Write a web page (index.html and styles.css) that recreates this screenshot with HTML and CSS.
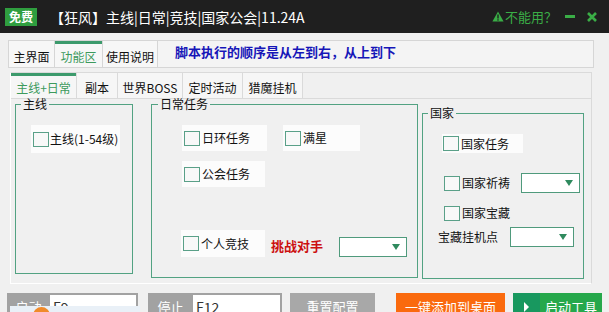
FILE: index.html
```html
<!DOCTYPE html>
<html>
<head>
<meta charset="utf-8">
<title>【狂风】主线|日常|竞技|国家公会|11.24A</title>
<link rel="stylesheet" href="styles.css">
</head>
<body>
<div class="titlebar">
  <span class="badge">免费</span>
  <span class="title">【狂风】主线|日常|竞技|国家公会|11.24A</span>
  <span class="help">
    <svg class="warn" width="12" height="11" viewBox="0 0 12 11"><path d="M6 0.5 L11.6 10.5 L0.4 10.5 Z" fill="#3aad46"/><rect x="5.3" y="3.5" width="1.4" height="4" fill="#1f1f1f"/><rect x="5.3" y="8.3" width="1.4" height="1.3" fill="#1f1f1f"/></svg>不能用？
  </span>
  <span class="min"></span>
  <svg class="close" width="10" height="10" viewBox="0 0 10 10"><path d="M1 1 L9 9 M9 1 L1 9" stroke="#3aad46" stroke-width="2.6"/></svg>
</div>

<div class="frame">
  <div class="tabs1">
    <div class="tab t-a">主界面</div>
    <div class="tab t-b on">功能区</div>
    <div class="tab t-c">使用说明</div>
    <div class="tip">脚本执行的顺序是从左到右，从上到下</div>
  </div>

  <div class="panel">
    <div class="tabs2">
      <div class="tab2 w66 on">主线+日常</div>
      <div class="tab2 w41">副本</div>
      <div class="tab2 w65">世界BOSS</div>
      <div class="tab2 w60">定时活动</div>
      <div class="tab2 w60">猎魔挂机</div>
    </div>

    <div class="groups">
      <fieldset class="grp g-main">
        <legend>主线</legend>
        <label class="chk c-main"><i class="box"></i>主线(1-54级)</label>
      </fieldset>

      <fieldset class="grp g-daily">
        <legend>日常任务</legend>
        <div class="row">
          <label class="chk c-ring"><i class="box"></i>日环任务</label>
          <label class="chk c-star"><i class="box"></i>满星</label>
        </div>
        <div class="row r-guild">
          <label class="chk c-guild"><i class="box"></i>公会任务</label>
        </div>
        <div class="row r-arena">
          <label class="chk c-arena"><i class="box"></i>个人竞技</label>
          <span class="red">挑战对手</span>
          <span class="sel s-arena"><i class="arrow"></i></span>
        </div>
      </fieldset>

      <fieldset class="grp g-nation">
        <legend>国家</legend>
        <label class="chk c-nation"><i class="box"></i>国家任务</label>
        <div class="line l-pray">
          <label class="plain"><i class="box"></i>国家祈祷</label>
          <span class="sel s-pray"><i class="arrow"></i></span>
        </div>
        <div class="line l-treasure">
          <label class="plain"><i class="box"></i>国家宝藏</label>
        </div>
        <div class="line l-spot">
          <span class="spot">宝藏挂机点</span>
          <span class="sel s-spot"><i class="arrow"></i></span>
        </div>
      </fieldset>
    </div>
  </div>
</div>

<div class="bottom">
  <div class="key k-start"><span class="klabel">启动</span><span class="kinput">F9</span></div>
  <div class="key k-stop"><span class="klabel">停止</span><span class="kinput">F12</span></div>
  <div class="btn b-reset">重置配置</div>
  <div class="btn b-desk">一键添加到桌面</div>
  <div class="btn b-run"><span class="play"></span><span class="run-text">启动工具</span></div>
</div>

<div class="toast"><span class="dot"></span></div>
</body>
</html>
```

FILE: styles.css
```css
body{
	margin: 0;
	width: 609px;
	height: 312px;
	overflow: hidden;
	position: relative;
	background: #f0f0f0;
	font-family: "Noto Sans CJK SC", "Microsoft YaHei", sans-serif;
	font-size: 12px;
	color: #111;
}

/* title bar */
.titlebar{
	height: 33px;
	background: #1f1f1f;
	display: flex;
	align-items: center;
	padding-left: 5px;
}
.badge{
	width: 32px;
	height: 18px;
	line-height: 18px;
	background: #2f9e3f;
	color: #fff;
	font-size: 12px;
	font-weight: bold;
	text-align: center;
}
.title{
	margin-left: 13px;
	color: #fff;
	font-size: 14px;
	line-height: 18px;
}
.help{
	margin-left: auto;
	display: flex;
	align-items: center;
	gap: 1px;
	color: #3aad46;
	font-size: 13px;
	line-height: 18px;
}
.min{
	width: 10px;
	height: 3px;
	background: #3aad46;
	margin-left: 8px;
}
.close{
	margin: 0 12px 0 12px;
}

/* outer tabs */
.frame{
	margin: 7px 15px 0 3px;
}
.tabs1{
	display: flex;
	height: 28px;
	margin-left: 5px;
	box-sizing: border-box;
	border: 1px solid #d6d6d6;
	border-left: 0;
	background: #f4f4f4;
}
.tab{
	box-sizing: border-box;
	height: 26px;
	padding-top: 8px;
	line-height: 16px;
	text-align: center;
	border-right: 1px solid #d6d6d6;
	background: #f7f7f7;
}
.t-a{ width: 47px; border-left: 1px solid #d6d6d6; }
.t-b{ width: 48px; }
.t-c{ width: 55px; }
.tab.on, .tab2.on{
	color: #3c9a5c;
	box-shadow: inset 0 3px 0 #3c9a6c;
}
.tip{
	margin-left: 17px;
	padding-top: 3px;
	line-height: 16px;
	font-size: 13px;
	font-weight: bold;
	color: #1616b8;
}

/* inner panel */
.panel{
	margin: 4px 0 0 7px;
	width: 582px;
	height: 212px;
	box-sizing: border-box;
	border-top: 1px solid #dadada;
	border-right: 1px solid #dadada;
	border-left: 1px solid #fff;
	border-bottom: 1px solid #fff;
}
.tabs2{
	display: flex;
	height: 25px;
	border-bottom: 1px solid #dadada;
}
.tab2{
	box-sizing: border-box;
	height: 25px;
	padding-top: 7px;
	line-height: 16px;
	text-align: center;
	border-right: 1px solid #dadada;
	background: #f6f6f6;
}
.w66{ width: 66px; }
.w41{ width: 41px; }
.w65{ width: 65px; }
.w60{ width: 60px; }

/* group boxes */
.groups{
	display: flex;
	align-items: flex-start;
	margin-top: -1px;
	padding-left: 4px;
}
.grp{
	margin: 0;
	padding: 15px 0 0 0;
	min-width: 0;
	box-sizing: border-box;
	border: 1px solid #52a282;
}
.grp legend{
	padding: 0 2px;
	line-height: 12px;
	font-size: 12px;
}
.g-main{
	width: 118px;
	height: 176px;
	padding-left: 15px;
}
.g-main legend{ margin-left: -10px; }
.g-daily{
	width: 267px;
	height: 180px;
	margin-left: 18px;
	padding-left: 30px;
}
.g-daily legend{ margin-left: -24px; }
.g-nation{
	width: 162px;
	height: 172px;
	margin: 9px 0 0 4px;
	padding-left: 19px;
}
.g-nation legend{ margin-left: -14px; }

/* checkbox items */
.box{
	display: inline-block;
	width: 14px;
	height: 13px;
	border: 1px solid #5aa088;
	background: #f8f8f8;
	flex: none;
}
.chk{
	display: flex;
	align-items: center;
	gap: 2px;
	padding-left: 2px;
	box-sizing: border-box;
	background: #fcfcfc;
	line-height: 16px;
}
.c-main{ width: 89px; height: 28px; gap: 1px; }
.c-ring{ width: 85px; height: 26px; }
.c-star{ width: 77px; height: 26px; margin-left: 16px; }
.c-guild{ width: 83px; height: 26px; }
.c-arena{ width: 84px; height: 27px; margin-left: -1px; }
.c-nation{ width: 81px; height: 19px; padding-left: 1px; }

.row{
	display: flex;
	align-items: center;
}
.r-guild{ margin-top: 10px; }
.r-arena{ margin-top: 43px; }
.red{
	margin-left: 6px;
	margin-top: 4px;
	font-size: 13px;
	font-weight: bold;
	color: #cc1010;
}

.sel{
	display: flex;
	align-items: center;
	justify-content: flex-end;
	box-sizing: border-box;
	height: 20px;
	padding-right: 6px;
	border: 1px solid #4f9a7c;
	background: #fff;
}
.arrow{
	width: 0;
	height: 0;
	border-left: 4px solid transparent;
	border-right: 4px solid transparent;
	border-top: 6px solid #2f8a5e;
}
.s-arena{ width: 68px; margin: 7px 0 0 16px; }
.s-pray{ width: 59px; margin-left: 11px; }
.s-spot{ width: 64px; margin-left: 12px; }

.line{
	display: flex;
	align-items: center;
}
.plain{
	display: flex;
	align-items: center;
	gap: 10px;
	margin-left: 2px;
	line-height: 16px;
}
.plain .box{ margin-right: -8px; }
.l-pray{ margin-top: 20px; }
.l-treasure{ margin-top: 12px; }
.l-spot{ margin: 6px 0 0 -4px; }
.spot{ line-height: 16px; }

/* bottom bar */
.bottom{
	display: flex;
	margin-top: 9px;
	padding-left: 7px;
	height: 28px;
}
.key{
	display: flex;
	height: 28px;
}
.klabel{
	box-sizing: border-box;
	padding-top: 6px;
	text-align: center;
	background: #a2a2a2;
	color: #fff;
	font-size: 13px;
	line-height: 16px;
}
.kinput{
	box-sizing: border-box;
	padding: 3px 0 0 3px;
	background: #fff;
	border-top: 2px solid #a2a2a2;
	border-right: 2px solid #a2a2a2;
	color: #333;
	font-size: 14px;
	line-height: 18px;
}
.k-start .klabel{ width: 43px; }
.k-start .kinput{ width: 88px; }
.k-stop{ margin-left: 10px; }
.k-stop .klabel{ width: 45px; }
.k-stop .kinput{ width: 89px; }

.btn{
	box-sizing: border-box;
	height: 28px;
	padding-top: 6px;
	text-align: center;
	color: #fff;
	font-size: 13px;
	line-height: 16px;
}
.b-reset{ width: 85px; margin-left: 8px; background: #a8a8a8; }
.b-desk{ width: 109px; margin-left: 21px; background: #fa6a0e; }
.b-run{
	display: flex;
	width: 89px;
	margin-left: 8px;
	padding-top: 0;
	background: #26a84b;
}
.play{
	width: 27px;
	background: #18985f;
	display: flex;
	align-items: center;
	justify-content: center;
}
.play::before{
	content: "";
	border-top: 5px solid transparent;
	border-bottom: 5px solid transparent;
	border-left: 5px solid #fff;
}
.run-text{
	flex: 1;
	padding-top: 6px;
}

/* notification sliding in at the bottom */
.toast{
	position: absolute;
	left: 10px;
	top: 306px;
	width: 130px;
	height: 12px;
	background: #e9f0f7;
}
.dot{
	position: absolute;
	left: 23px;
	top: 1px;
	width: 17px;
	height: 17px;
	border-radius: 50%;
	background: #f08a2a;
}
```
